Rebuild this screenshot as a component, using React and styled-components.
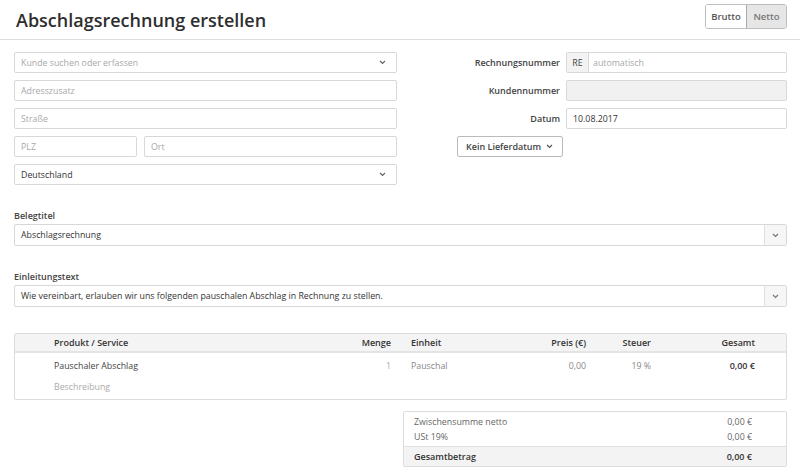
import styled, { createGlobalStyle } from "styled-components"

const Global = createGlobalStyle`
  html, body { margin: 0; padding: 0; background: #fff; }
  body { font-family: "Open Sans", "DejaVu Sans", sans-serif; color: #333; }
  * { box-sizing: border-box; }
`

const Chevron = ({ color = "#666" }) => (
  <svg width="7" height="5" viewBox="0 0 7 5">
    <path d="M1 1 L3.5 3.5 L6 1" fill="none" stroke={color} strokeWidth="1.2" />
  </svg>
)

export default function App() {
  return (
    <Page>
      <Global />
      <Header>
        <Title>Abschlagsrechnung erstellen</Title>
        <Toggle>
          <ToggleBtn>Brutto</ToggleBtn>
          <ToggleBtn active>Netto</ToggleBtn>
        </Toggle>
      </Header>

      <Columns>
        <LeftCol>
          <Field>
            <Placeholder>Kunde suchen oder erfassen</Placeholder>
            <Chevron />
          </Field>
          <Field><Placeholder>Adresszusatz</Placeholder></Field>
          <Field><Placeholder>Straße</Placeholder></Field>
          <Split>
            <Field><Placeholder>PLZ</Placeholder></Field>
            <Field><Placeholder>Ort</Placeholder></Field>
          </Split>
          <Field>
            <Value>Deutschland</Value>
            <Chevron />
          </Field>
        </LeftCol>

        <RightCol>
          <FormRow>
            <Label>Rechnungsnummer</Label>
            <Group>
              <Addon>RE</Addon>
              <Placeholder>automatisch</Placeholder>
            </Group>
          </FormRow>
          <FormRow>
            <Label>Kundennummer</Label>
            <Field disabled />
          </FormRow>
          <FormRow>
            <Label>Datum</Label>
            <Field><Value>10.08.2017</Value></Field>
          </FormRow>
          <ButtonRow>
            <DropButton>
              Kein Lieferdatum <Chevron color="#555" />
            </DropButton>
          </ButtonRow>
        </RightCol>
      </Columns>

      <Section gap={24}>
        <SectionLabel>Belegtitel</SectionLabel>
        <Combo>
          <ComboText>Abschlagsrechnung</ComboText>
          <ComboArrow><Chevron color="#777" /></ComboArrow>
        </Combo>
      </Section>

      <Section gap={24}>
        <SectionLabel>Einleitungstext</SectionLabel>
        <Combo>
          <ComboText>Wie vereinbart, erlauben wir uns folgenden pauschalen Abschlag in Rechnung zu stellen.</ComboText>
          <ComboArrow><Chevron color="#777" /></ComboArrow>
        </Combo>
      </Section>

      <Table>
        <HeadRow>
          <Cell />
          <Cell head>Produkt / Service</Cell>
          <Cell head right>Menge</Cell>
          <Cell />
          <Cell head>Einheit</Cell>
          <Cell head right>Preis (€)</Cell>
          <Cell head right>Steuer</Cell>
          <Cell head right>Gesamt</Cell>
        </HeadRow>
        <BodyRow>
          <Cell />
          <Cell>Pauschaler Abschlag</Cell>
          <Cell right faint>1</Cell>
          <Cell />
          <Cell muted>Pauschal</Cell>
          <Cell right muted>0,00</Cell>
          <Cell right muted>19 %</Cell>
          <Cell right head>0,00 €</Cell>
        </BodyRow>
        <DescRow>
          <Cell />
          <Cell faint>Beschreibung</Cell>
        </DescRow>
      </Table>

      <Totals>
        <TotalRow>
          <span>Zwischensumme netto</span>
          <span>0,00 €</span>
        </TotalRow>
        <TotalRow>
          <span>USt 19%</span>
          <span>0,00 €</span>
        </TotalRow>
        <TotalRow grand>
          <span>Gesamtbetrag</span>
          <span>0,00 €</span>
        </TotalRow>
      </Totals>
    </Page>
  )
}

const Page = styled.div`
  width: 800px;
  height: 472px;
  overflow: hidden;
  padding: 0 13px 0 14px;
`

const Header = styled.div`
  display: flex;
  align-items: center;
  justify-content: space-between;
  height: 40px;
  margin: 0 -13px 0 -14px;
  padding: 0 13px 0 16px;
  border-bottom: 1px solid #dedede;
`

const Title = styled.h1`
  margin: 0;
  font-size: 18px;
  font-weight: 600;
  color: #2e2e2e;
`

const Toggle = styled.div`
  display: flex;
  border: 1px solid #bdbdbd;
  border-radius: 3px;
  overflow: hidden;
  height: 25px;
  margin-top: -6px;
`

const ToggleBtn = styled.div`
  display: flex;
  align-items: center;
  justify-content: center;
  width: 40px;
  font-size: 9.5px;
  font-weight: 600;
  color: ${p => (p.active ? "#777" : "#555")};
  background: ${p => (p.active ? "#e6e6e6" : "#fff")};
  border-left: ${p => (p.active ? "1px solid #aaa" : "none")};
`

const Columns = styled.div`
  display: grid;
  grid-template-columns: 383px 1fr;
  column-gap: 60px;
  margin-top: 12px;
`

const LeftCol = styled.div`
  display: flex;
  flex-direction: column;
  gap: 7px;
`

const RightCol = styled.div`
  display: flex;
  flex-direction: column;
  gap: 7px;
`

const Field = styled.div`
  display: flex;
  align-items: center;
  justify-content: space-between;
  height: 21px;
  padding: 0 10px 0 6px;
  border: 1px solid #d8d8d8;
  border-radius: 2px;
  background: ${p => (p.disabled ? "#f1f1f1" : "#fff")};
  font-size: 8.8px;
`

const Split = styled.div`
  display: grid;
  grid-template-columns: 123px 1fr;
  gap: 7px;
`

const Placeholder = styled.span`
  color: #a8a8a8;
`

const Value = styled.span`
  color: #333;
`

const FormRow = styled.div`
  display: grid;
  grid-template-columns: 103px 221px;
  column-gap: 6px;
  align-items: center;
`

const ButtonRow = styled.div`
  display: flex;
`

const Label = styled.div`
  text-align: right;
  font-size: 9px;
  font-weight: 600;
  color: #444;
`

const Group = styled.div`
  display: flex;
  align-items: center;
  height: 21px;
  border: 1px solid #d8d8d8;
  border-radius: 2px;
  font-size: 8.8px;
`

const Addon = styled.span`
  display: flex;
  align-items: center;
  justify-content: center;
  width: 22px;
  height: 100%;
  background: #f3f3f3;
  border-right: 1px solid #d8d8d8;
  color: #444;
  margin-right: 4px;
`

const DropButton = styled.div`
  display: flex;
  align-items: center;
  gap: 5px;
  height: 21px;
  padding: 0 9px 0 8px;
  border: 1px solid #bbb;
  border-radius: 2px;
  font-size: 9px;
  font-weight: 600;
  color: #444;
  white-space: nowrap;
`

const Section = styled.div`
  margin-top: ${p => p.gap}px;
`

const SectionLabel = styled.div`
  font-size: 9px;
  font-weight: 600;
  color: #444;
  line-height: 13px;
  margin-bottom: 2px;
`

const Combo = styled.div`
  display: flex;
  align-items: stretch;
  height: 22px;
  border: 1px solid #d8d8d8;
  border-radius: 2px;
  font-size: 8.8px;
`

const ComboText = styled.div`
  flex: 1;
  display: flex;
  align-items: center;
  padding-left: 6px;
  color: #333;
`

const ComboArrow = styled.div`
  width: 22px;
  display: flex;
  align-items: center;
  justify-content: center;
  background: #f6f6f6;
  border-left: 1px solid #e0e0e0;
`

const Table = styled.div`
  margin-top: 26px;
  border: 1px solid #dcdcdc;
  border-radius: 2px;
  font-size: 8.8px;
`

const tableCols = "39px 287px 50px 20px 110px 65px 65px 104px"

const HeadRow = styled.div`
  display: grid;
  grid-template-columns: ${tableCols};
  height: 19px;
  align-items: center;
  background: #f4f4f4;
  border-bottom: 2px solid #e4e4e4;
`

const BodyRow = styled.div`
  display: grid;
  grid-template-columns: ${tableCols};
  height: 25px;
  align-items: center;
`

const DescRow = styled.div`
  display: grid;
  grid-template-columns: 39px 1fr;
  height: 21px;
  align-items: center;
  padding-bottom: 3px;
`

const Cell = styled.div`
  font-weight: ${p => (p.head ? 600 : 400)};
  font-size: ${p => (p.head ? "9px" : "8.8px")};
  text-align: ${p => (p.right ? "right" : "left")};
  color: ${p => (p.faint ? "#aaa" : p.muted ? "#888" : p.head ? "#333" : "#444")};
  white-space: nowrap;
`

const Totals = styled.div`
  width: 384px;
  margin: 11px 0 0 auto;
  border: 1px solid #dcdcdc;
  border-radius: 2px;
  font-size: 8.8px;
  padding-top: 2px;
`

const TotalRow = styled.div`
  display: flex;
  justify-content: space-between;
  height: ${p => (p.grand ? "20px" : "15px")};
  align-items: center;
  padding: 0 34px 0 10px;
  color: ${p => (p.grand ? "#333" : "#666")};
  font-weight: ${p => (p.grand ? 600 : 400)};
  font-size: ${p => (p.grand ? "9px" : "8.8px")};
  background: ${p => (p.grand ? "#f3f3f3" : "transparent")};
  border-top: ${p => (p.grand ? "1px solid #e0e0e0" : "none")};
  margin-top: ${p => (p.grand ? "2px" : "0")};
`
